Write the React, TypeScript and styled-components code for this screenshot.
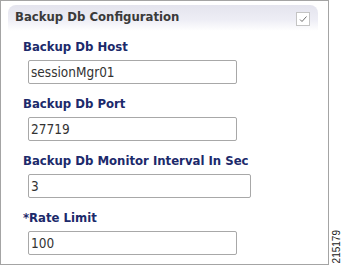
import React from 'react';
import styled, { createGlobalStyle } from 'styled-components';

const GlobalStyle = createGlobalStyle`
    html, body {
        margin: 0;
        padding: 0;
        background: #ffffff;
    }
`;

const LABEL_BLUE = '#1c2a6b';
const FONT = '"DejaVu Sans Condensed", "DejaVu Sans", Verdana, sans-serif';

const Page = styled.div`
    display: flex;
    width: 342px;
    height: 266px;
`;

const Panel = styled.div`
    box-sizing: border-box;
    width: 329px;
    height: 265px;
    border: 1px solid #a4a4a4;
    padding: 4px 10px 0 7px;
    display: flex;
    flex-direction: column;
`;

const Header = styled.div`
    height: 26px;
    box-sizing: border-box;
    padding: 4px 8px 0 7px;
    border-radius: 8px 8px 0 0;
    background: linear-gradient(to bottom, #e4e4ee 0%, #ededf5 55%, #ffffff 100%);
    display: flex;
    justify-content: space-between;
    align-items: flex-start;
`;

const HeaderTitle = styled.span`
    font-family: ${FONT};
    font-weight: bold;
    font-size: 13px;
    line-height: 16px;
    color: #3a3a3a;
`;

const CheckBox = styled.span`
    box-sizing: border-box;
    width: 14px;
    height: 14px;
    margin-top: 3px;
    border: 1px solid #c4c4c4;
    background: #ffffff;
    display: flex;
    align-items: center;
    justify-content: center;
`;

const Fields = styled.div`
    margin: 8px 0 0 15px;
    display: flex;
    flex-direction: column;
    gap: 12px;
`;

const Field = styled.div`
    display: flex;
    flex-direction: column;
`;

const Label = styled.label`
    font-family: ${FONT};
    font-weight: bold;
    font-size: 13px;
    line-height: 16px;
    color: ${LABEL_BLUE};
    margin-bottom: 5px;
`;

const TextInput = styled.input<{ $width: number }>`
    box-sizing: border-box;
    width: ${(p) => p.$width}px;
    height: 24px;
    margin: 0 0 0 5px;
    padding: 0 0 0 2px;
    border: 1px solid #a8a8a8;
    border-radius: 2px;
    background: #ffffff;
    font-family: ${FONT};
    font-size: 13.5px;
    color: #333333;
    outline: none;
`;

const Side = styled.div`
    flex: 1;
    display: flex;
    align-items: flex-end;
    justify-content: center;
    padding: 0 0 3px 2px;
`;

const FigureId = styled.span`
    writing-mode: vertical-rl;
    transform: rotate(180deg);
    font-family: "Liberation Sans", Arial, sans-serif;
    font-size: 10px;
    line-height: 10px;
    color: #222222;
`;

interface IFieldDef {
    label: string;
    value: string;
    width: number;
}

const FIELDS: IFieldDef[] = [
    { label: 'Backup Db Host', value: 'sessionMgr01', width: 209 },
    { label: 'Backup Db Port', value: '27719', width: 209 },
    { label: 'Backup Db Monitor Interval In Sec', value: '3', width: 223 },
    { label: '*Rate Limit', value: '100', width: 209 },
];

export default function App() {
    return (
        <>
            <GlobalStyle />
            <Page>
                <Panel>
                    <Header>
                        <HeaderTitle>Backup Db Configuration</HeaderTitle>
                        <CheckBox>
                            <svg width="10" height="10" viewBox="0 0 10 10">
                                <path d="M2 5.5 L4 7.5 L8.5 2.5" fill="none" stroke="#6e6e6e" strokeWidth="1" />
                            </svg>
                        </CheckBox>
                    </Header>
                    <Fields>
                        {FIELDS.map((field) => (
                            <Field key={field.label}>
                                <Label>{field.label}</Label>
                                <TextInput $width={field.width} defaultValue={field.value} readOnly />
                            </Field>
                        ))}
                    </Fields>
                </Panel>
                <Side>
                    <FigureId>215179</FigureId>
                </Side>
            </Page>
        </>
    );
}
